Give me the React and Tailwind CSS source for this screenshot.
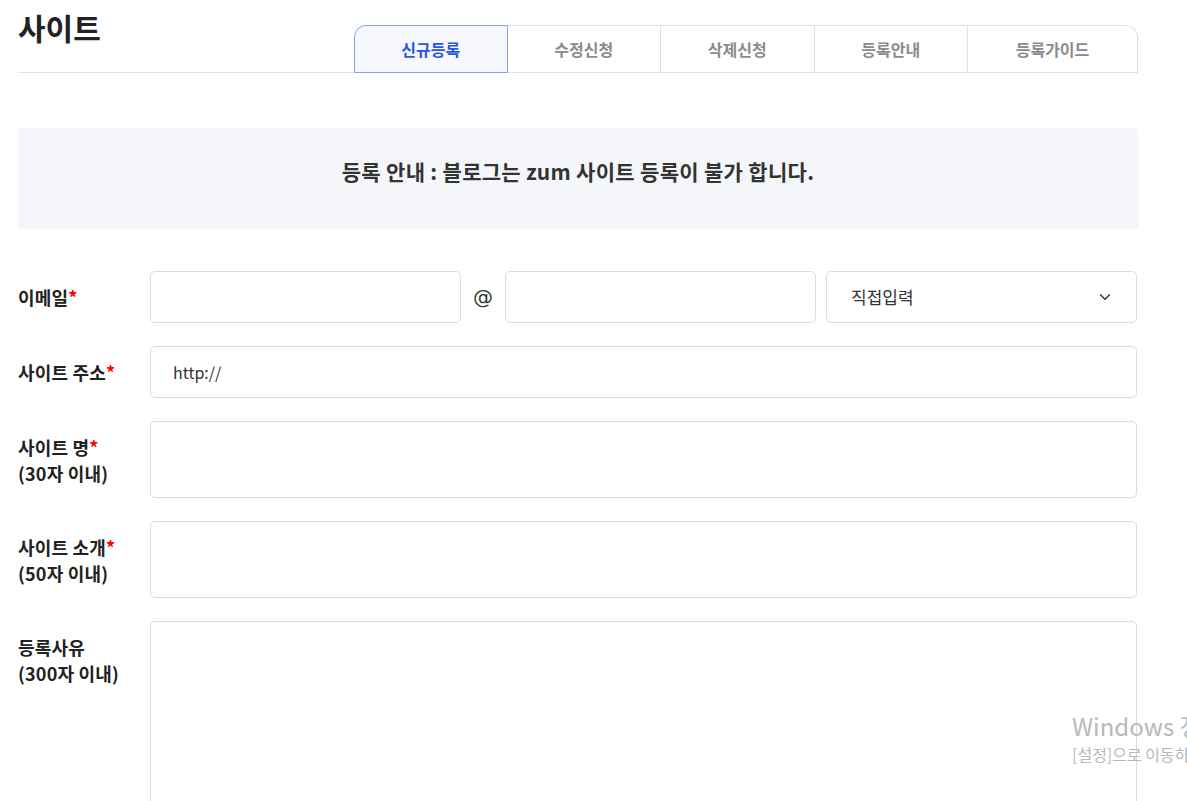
import { ChevronDown } from "lucide-react";

const tabs = ["신규등록", "수정신청", "삭제신청", "등록안내", "등록가이드"];

const Label = ({ title, sub, required, top }) => (
  <div
    className={`w-[132px] shrink-0 text-[18px] font-bold leading-[26px] tracking-[0.2px] text-[#222] ${
      top ? "pt-[13px]" : ""
    }`}
  >
    {title}
    {required && <span className="text-[#ff0000]">*</span>}
    {sub && <div>{sub}</div>}
  </div>
);

export default function App() {
  return (
    <div
      className="relative min-h-[801px] overflow-hidden bg-white"
      style={{ fontFamily: '"Noto Sans CJK KR", "Noto Sans", sans-serif' }}
    >
      <div className="ml-[18px] w-[1120px]">
        {/* Header with tabs */}
        <div className="flex items-end justify-between border-b border-[#e3e3e8]">
          <h1 className="mb-[26px] self-start pt-[8px] text-[30px] font-bold leading-[38px] text-[#222]">
            사이트
          </h1>
          <div className="-mb-px flex h-[48px] w-[784px]">
            {tabs.map((t, i) => (
              <button
                key={t}
                className={`flex h-full items-center justify-center text-[16px] font-bold ${
                  i === 4 ? "w-[170px]" : "w-[153.5px]"
                } ${
                  i === 0
                    ? "rounded-tl-[12px] border border-[#84a2f5] bg-[#f6f8fe] text-[#2756e4]"
                    : "border-y border-r border-[#dfe0ea] text-[#8a8a8f]"
                } ${i === 4 ? "rounded-tr-[12px] border-b-[#dfe0ea]" : ""}`}
              >
                {t}
              </button>
            ))}
          </div>
        </div>

        {/* Notice */}
        <div className="mt-[55px] flex h-[101px] items-center justify-center rounded-[4px] bg-[#f5f6fa] pb-[14px] text-[21px] font-bold tracking-[0.3px] text-[#333]">
          등록 안내 : 블로그는 zum 사이트 등록이 불가 합니다.
        </div>

        {/* Form */}
        <div className="mt-[42px] flex flex-col gap-[24px]">
          <div className="flex items-center">
            <Label title="이메일" required />
            <div className="flex flex-1 items-center">
              <input className="h-[52px] w-[311px] rounded-[5px] border border-[#dcdcdc] outline-none" />
              <span className="w-[44px] text-center text-[20px] leading-[26px] text-[#333]" style={{ fontFamily: '"DejaVu Sans", sans-serif' }}>
                @
              </span>
              <input className="h-[52px] w-[311px] rounded-[5px] border border-[#dcdcdc] outline-none" />
              <div className="ml-[10px] flex h-[52px] w-[311px] items-center justify-between rounded-[5px] border border-[#dcdcdc] pl-[24px] pr-[22px] text-[17px] text-[#333]">
                직접입력
                <ChevronDown size={18} strokeWidth={1.8} className="text-[#333]" />
              </div>
            </div>
          </div>

          <div className="-mt-[1px] flex items-center">
            <Label title="사이트 주소" required />
            <div className="flex h-[52px] w-[987px] items-center rounded-[5px] border border-[#dcdcdc] pl-[22px] text-[16px] text-[#333]">
              http://
            </div>
          </div>

          <div className="-mt-[1px] flex">
            <Label title="사이트 명" sub="(30자 이내)" required top />
            <div className="h-[77px] w-[987px] rounded-[5px] border border-[#dcdcdc]" />
          </div>

          <div className="-mt-[1px] flex">
            <Label title="사이트 소개" sub="(50자 이내)" required top />
            <div className="h-[77px] w-[987px] rounded-[5px] border border-[#dcdcdc]" />
          </div>

          <div className="-mt-[1px] flex">
            <Label title="등록사유" sub="(300자 이내)" top />
            <div className="h-[220px] w-[987px] rounded-[5px] border border-[#dcdcdc]" />
          </div>
        </div>
      </div>

      {/* Windows activation watermark */}
      <div className="pointer-events-none absolute left-[1072px] top-[710px] whitespace-nowrap text-[#b8b8b8]">
        <div className="text-[24px] leading-[32px]">Windows 정품 인증</div>
        <div className="text-[16px] leading-[24px]">[설정]으로 이동하여 Windows를 정품 인증합니다.</div>
      </div>
    </div>
  );
}
